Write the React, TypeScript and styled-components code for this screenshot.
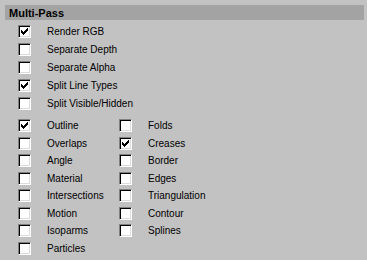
import React from "react";
import styled, { createGlobalStyle } from "styled-components";

const Global = createGlobalStyle`
  html, body { margin: 0; padding: 0; background: #c2c2c2; }
  * { box-sizing: border-box; }
`;

const Panel = styled.div`
  width: 367px;
  height: 260px;
  background: #c2c2c2;
  padding: 5px 3px 0 5px;
  font-family: "Liberation Sans", Arial, sans-serif;
  color: #000;
`;

const Header = styled.div`
  height: 15px;
  width: 359px;
  background: #a3a3a3;
  display: flex;
  align-items: center;
  padding-left: 4px;
  font-weight: bold;
  font-size: 11px;
  color: #000;
`;

const List = styled.div`
  display: flex;
  flex-direction: column;
  padding: 3px 0 0 13px;
`;

const Grid = styled.div`
  display: grid;
  grid-template-columns: 101px auto;
  grid-auto-rows: 17.5px;
  grid-auto-flow: column;
  grid-template-rows: repeat(8, 17.5px);
  padding: 4px 0 0 13px;
`;

const Row = styled.div<{ $h?: number }>`
  height: ${(p) => p.$h ?? 18}px;
  display: flex;
  align-items: flex-start;
  padding-top: 2px;
`;

const GridRow = styled.div`
  display: flex;
  align-items: flex-start;
  padding-top: 2px;
`;

const Box = styled.div`
  width: 13px;
  height: 13px;
  flex: none;
  background: #fff;
  border: 1px solid;
  border-color: #808080 #ffffff #ffffff #808080;
  box-shadow: inset 1px 1px 0 #000, inset -1px -1px 0 #dcdcdc;
  display: flex;
  align-items: center;
  justify-content: center;
`;

const Label = styled.span`
  margin-left: 16px;
  font-size: 10px;
  line-height: 13px;
  white-space: nowrap;
`;

const Check = () => (
  <svg width="7" height="7" viewBox="0 0 7 7" shapeRendering="crispEdges">
    <path
      fill="#000"
      d="M6 0h1v3h-1zM5 1h1v3h-1zM4 2h1v3h-1zM3 3h1v3h-1zM2 4h1v3h-1zM1 3h1v3h-1zM0 2h1v3h-1z"
    />
  </svg>
);

const CheckItem: React.FC<{ label: string; checked?: boolean }> = ({ label, checked }) => (
  <>
    <Box>{checked && <Check />}</Box>
    <Label>{label}</Label>
  </>
);

const group1: [string, boolean][] = [
  ["Render RGB", true],
  ["Separate Depth", false],
  ["Separate Alpha", false],
  ["Split Line Types", true],
  ["Split Visible/Hidden", false],
];

const col1: [string, boolean][] = [
  ["Outline", true],
  ["Overlaps", false],
  ["Angle", false],
  ["Material", false],
  ["Intersections", false],
  ["Motion", false],
  ["Isoparms", false],
  ["Particles", false],
];

const col2: [string, boolean][] = [
  ["Folds", false],
  ["Creases", true],
  ["Border", false],
  ["Edges", false],
  ["Triangulation", false],
  ["Contour", false],
  ["Splines", false],
];

export default function App() {
  return (
    <>
      <Global />
      <Panel>
        <Header>Multi-Pass</Header>
        <List>
          {group1.map(([l, c]) => (
            <Row key={l}>
              <CheckItem label={l} checked={c} />
            </Row>
          ))}
        </List>
        <Grid>
          {col1.map(([l, c]) => (
            <GridRow key={l}>
              <CheckItem label={l} checked={c} />
            </GridRow>
          ))}
          {col2.map(([l, c]) => (
            <GridRow key={l}>
              <CheckItem label={l} checked={c} />
            </GridRow>
          ))}
        </Grid>
      </Panel>
    </>
  );
}
